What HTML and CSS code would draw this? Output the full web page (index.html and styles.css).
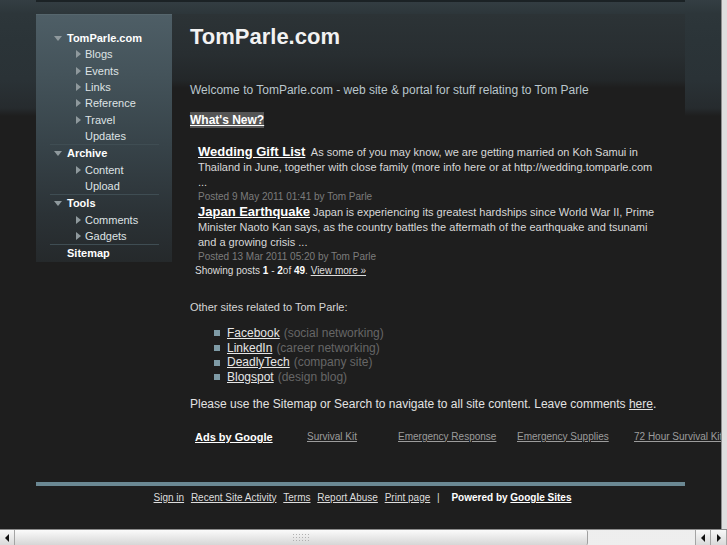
FILE: index.html
```html
<!DOCTYPE html>
<html>
<head>
<meta charset="utf-8">
<title>TomParle.com</title>
<link rel="stylesheet" href="styles.css">
</head>
<body>
<div class="screen">
  <div class="viewport">
    <div class="page">
      <div class="topbar"></div>
      <div class="wrap">
        <nav class="sidebar">
          <div class="item lvl0"><span class="tog down"></span><a href="#">TomParle.com</a></div>
          <div class="item lvl1"><span class="tog right"></span><a href="#">Blogs</a></div>
          <div class="item lvl1"><span class="tog right"></span><a href="#">Events</a></div>
          <div class="item lvl1"><span class="tog right"></span><a href="#">Links</a></div>
          <div class="item lvl1"><span class="tog right"></span><a href="#">Reference</a></div>
          <div class="item lvl1"><span class="tog right"></span><a href="#">Travel</a></div>
          <div class="item lvl1"><span class="tog"></span><a href="#">Updates</a></div>
          <div class="sep"></div>
          <div class="item lvl0"><span class="tog down"></span><a href="#">Archive</a></div>
          <div class="item lvl1"><span class="tog right"></span><a href="#">Content</a></div>
          <div class="item lvl1"><span class="tog"></span><a href="#">Upload</a></div>
          <div class="sep"></div>
          <div class="item lvl0"><span class="tog down"></span><a href="#">Tools</a></div>
          <div class="item lvl1"><span class="tog right"></span><a href="#">Comments</a></div>
          <div class="item lvl1"><span class="tog right"></span><a href="#">Gadgets</a></div>
          <div class="sep"></div>
          <div class="item lvl0"><span class="tog"></span><a href="#">Sitemap</a></div>
        </nav>
        <main class="main">
          <h1 class="title">TomParle.com</h1>
          <p class="welcome">Welcome to TomParle.com - web site &amp; portal for stuff relating to Tom Parle</p>
          <p class="whatsnew"><a href="#">What's New?</a></p>
          <div class="posts">
            <div class="post">
              <p class="post-body"><a class="post-title" href="#">Wedding Gift List</a> As some of you may know, we are getting married on Koh Samui in<br>Thailand in June, together with close family (more info here or at http://wedding.tomparle.com<br>...</p>
              <p class="posted">Posted 9 May 2011 01:41 by Tom Parle</p>
            </div>
            <div class="post">
              <p class="post-body"><a class="post-title tight" href="#">Japan Earthquake</a> Japan is experiencing its greatest hardships since World War II, Prime<br>Minister Naoto Kan says, as the country battles the aftermath of the earthquake and tsunami<br>and a growing crisis ...</p>
              <p class="posted">Posted 13 Mar 2011 05:20 by Tom Parle</p>
            </div>
            <p class="showing">Showing posts <b>1</b> - <b>2</b>of <b>49</b>. <a href="#">View more »</a></p>
          </div>
          <p class="other">Other sites related to Tom Parle:</p>
          <ul class="sites">
            <li><a href="#">Facebook</a> <span class="note">(social networking)</span></li>
            <li><a href="#">LinkedIn</a> <span class="note">(career networking)</span></li>
            <li><a href="#">DeadlyTech</a> <span class="note">(company site)</span></li>
            <li><a href="#">Blogspot</a> <span class="note">(design blog)</span></li>
          </ul>
          <p class="please">Please use the Sitemap or Search to navigate to all site content. Leave comments <a href="#">here</a>.</p>
          <div class="ads">
            <a class="ads-head" href="#">Ads by Google</a>
            <a class="ad" href="#">Survival Kit</a>
            <a class="ad" href="#">Emergency Response</a>
            <a class="ad" href="#">Emergency Supplies</a>
            <a class="ad" href="#">72 Hour Survival Kit</a>
          </div>
        </main>
      </div>
      <div class="band"></div>
      <div class="footer">
        <a href="#">Sign in</a>
        <a href="#">Recent Site Activity</a>
        <a href="#">Terms</a>
        <a href="#">Report Abuse</a>
        <a href="#">Print page</a>
        <span class="pipe">|</span>
        <span class="powered">Powered by <a href="#">Google Sites</a></span>
      </div>
    </div>
    <div class="vedge"></div>
  </div>
  <div class="hscroll">
    <div class="sbtn"><span class="arr left"></span></div>
    <div class="thumb"><span class="grip"></span></div>
    <div class="track"></div>
    <div class="sbtn"><span class="arr left"></span></div>
    <div class="sbtn"><span class="arr right"></span></div>
  </div>
</div>
</body>
</html>
```

FILE: styles.css
```css
* { box-sizing: border-box; }
html, body { margin: 0; padding: 0; background: #1e1e1e; overflow: hidden; }
body { font-family: "Liberation Sans", Arial, sans-serif; color: #dddddd; }
p, h1, ul { margin: 0; padding: 0; }
a { color: inherit; }

.screen { width: 727px; height: 545px; display: flex; flex-direction: column; overflow: hidden; }
.viewport { display: flex; height: 529px; flex: none; overflow: hidden; }
.page {
  width: 721px; flex: none; overflow: hidden; padding-left: 36px;
  background: linear-gradient(#343e43 0, #2d363a 14px, #2b3438 40px, #2a3236 80px, #262b2e 108px, #1e1e1e 116px, #1e1e1e 100%);
}
.vedge { width: 6px; flex: none; background: #dedede; border-left: 1px solid #8e8e8e; }

.topbar { width: 649px; height: 2px; background: #1b2225; margin-bottom: 12px; }
.wrap { display: flex; align-items: flex-start; width: 649px; }

/* sidebar */
.sidebar {
  width: 136px; flex: none; height: 248px; padding-top: 15px;
  background: linear-gradient(#4e5e66 0, #44535a 60px, #374349 130px, #2b3236 200px, #25292b 248px);
  border-top: 1px solid #56666d;
}
.item { height: 16.33px; line-height: 16.33px; font-size: 11px; display: flex; align-items: center; white-space: nowrap; }
.item a { text-decoration: none; color: #dfe3e5; }
.lvl0 { padding-left: 18px; font-weight: bold; }
.lvl0 a { color: #ffffff; }
.lvl0 .tog { width: 13px; }
.lvl1 { padding-left: 40px; }
.lvl1 .tog { width: 9px; }
.tog { flex: none; height: 16px; position: relative; }
.tog.down::before {
  content: ""; position: absolute; left: 0; top: 6px;
  border-left: 4px solid transparent; border-right: 4px solid transparent; border-top: 5px solid #8f999d;
}
.tog.right::before {
  content: ""; position: absolute; left: 0; top: 4px;
  border-top: 4px solid transparent; border-bottom: 4px solid transparent; border-left: 5px solid #8f999d;
}
.sep { height: 1px; margin: 0 13px 0 14px; background: #3f4d53; }

/* main */
.main {
  flex: 1; min-width: 0; padding: 10px 0 37px 18px;
  background: linear-gradient(#2c3336 0, #282e31 40px, #232729 66px, #1e1e1e 74px, #1e1e1e 100%);
}
.title { font-size: 22px; line-height: 26px; font-weight: bold; color: #f2f2f2; }
.welcome { margin-top: 32px; font-size: 12px; line-height: 16px; color: #b9c6cd; white-space: nowrap; }
.whatsnew { margin-top: 14px; font-size: 12px; line-height: 16px; font-weight: bold; }
.whatsnew a { display: inline-block; background: #555555; color: #ffffff; }

.posts { margin-top: 16px; }
.post { padding-left: 8px; }
.post-body { font-size: 11px; line-height: 15px; color: #d8d8d8; white-space: nowrap; }
.post-title { font-size: 13px; line-height: 15px; font-weight: bold; color: #ffffff; margin-right: 3px; }
.post-title.tight { margin-right: 0; }
.posted { font-size: 10px; line-height: 14px; color: #7c7c7c; }
.showing { padding-left: 5px; font-size: 10px; line-height: 14px; color: #dddddd; }
.showing b { color: #ffffff; }

.other { margin-top: 21px; font-size: 11px; line-height: 16px; color: #d6d6d6; }
.sites { margin-top: 11px; list-style: none; padding-left: 24px; }
.sites li { font-size: 12px; line-height: 14.67px; display: flex; align-items: center; gap: 4px; white-space: nowrap; }
.sites li::before { content: ""; width: 6px; height: 6px; background: #7f9ba6; margin-right: 3px; flex: none; }
.sites a { color: #e6e6e6; }
.note { color: #666666; }
.please { margin-top: 11px; font-size: 12px; line-height: 16px; color: #e2e2e2; white-space: nowrap; }

.ads {
  margin-top: 17px; padding-left: 5px; height: 16px; line-height: 16px;
  display: grid; grid-template-columns: 112px 91px 119px 117px max-content; white-space: nowrap;
}
.ads-head { font-size: 11px; font-weight: bold; color: #ffffff; }
.ad { font-size: 10px; color: #9c9c9c; }

/* footer */
.band { width: 649px; height: 4px; background: #6b8893; }
.footer {
  width: 649px; margin-top: 5px; height: 14px; line-height: 14px; font-size: 10px;
  text-align: center; color: #dddddd; white-space: nowrap; padding-left: 2px;
}
.footer a { margin: 0 2px; }
.pipe { margin: 0 6px 0 2px; }
.powered { font-weight: bold; color: #ffffff; margin-left: 3px; }
.powered a { margin: 0; }

/* horizontal scrollbar */
.hscroll {
  height: 16px; flex: none; display: flex; border-top: 1px solid #8a8a8a;
  background: linear-gradient(#f4f4f4, #dedede);
}
.sbtn {
  width: 16px; flex: none; display: flex; align-items: center; justify-content: center;
  border-right: 1px solid #a4a4a4; background: linear-gradient(#f8f8f8, #dadada);
}
.sbtn:first-child { width: 15px; }
.hscroll .sbtn:nth-child(4) { border-left: 1px solid #a4a4a4; }
.arr { width: 0; height: 0; }
.arr.left { border-top: 4px solid transparent; border-bottom: 4px solid transparent; border-right: 4px solid #111; }
.arr.right { border-top: 4px solid transparent; border-bottom: 4px solid transparent; border-left: 4px solid #111; }
.thumb {
  width: 573px; flex: none; display: flex; align-items: center; justify-content: center;
  background: linear-gradient(#fbfbfb, #d6d6d6); border-right: 1px solid #a0a0a0; border-radius: 0 2px 2px 0;
}
.grip {
  width: 18px; height: 9px;
  background-image: radial-gradient(circle, #b0b0b0 0.8px, transparent 1px);
  background-size: 3px 3px;
}
.track {
  flex: 1;
  background-color: #f7f7f7;
  background-image: radial-gradient(circle, #e2e2e2 0.6px, transparent 0.8px);
  background-size: 2px 2px;
}
```
